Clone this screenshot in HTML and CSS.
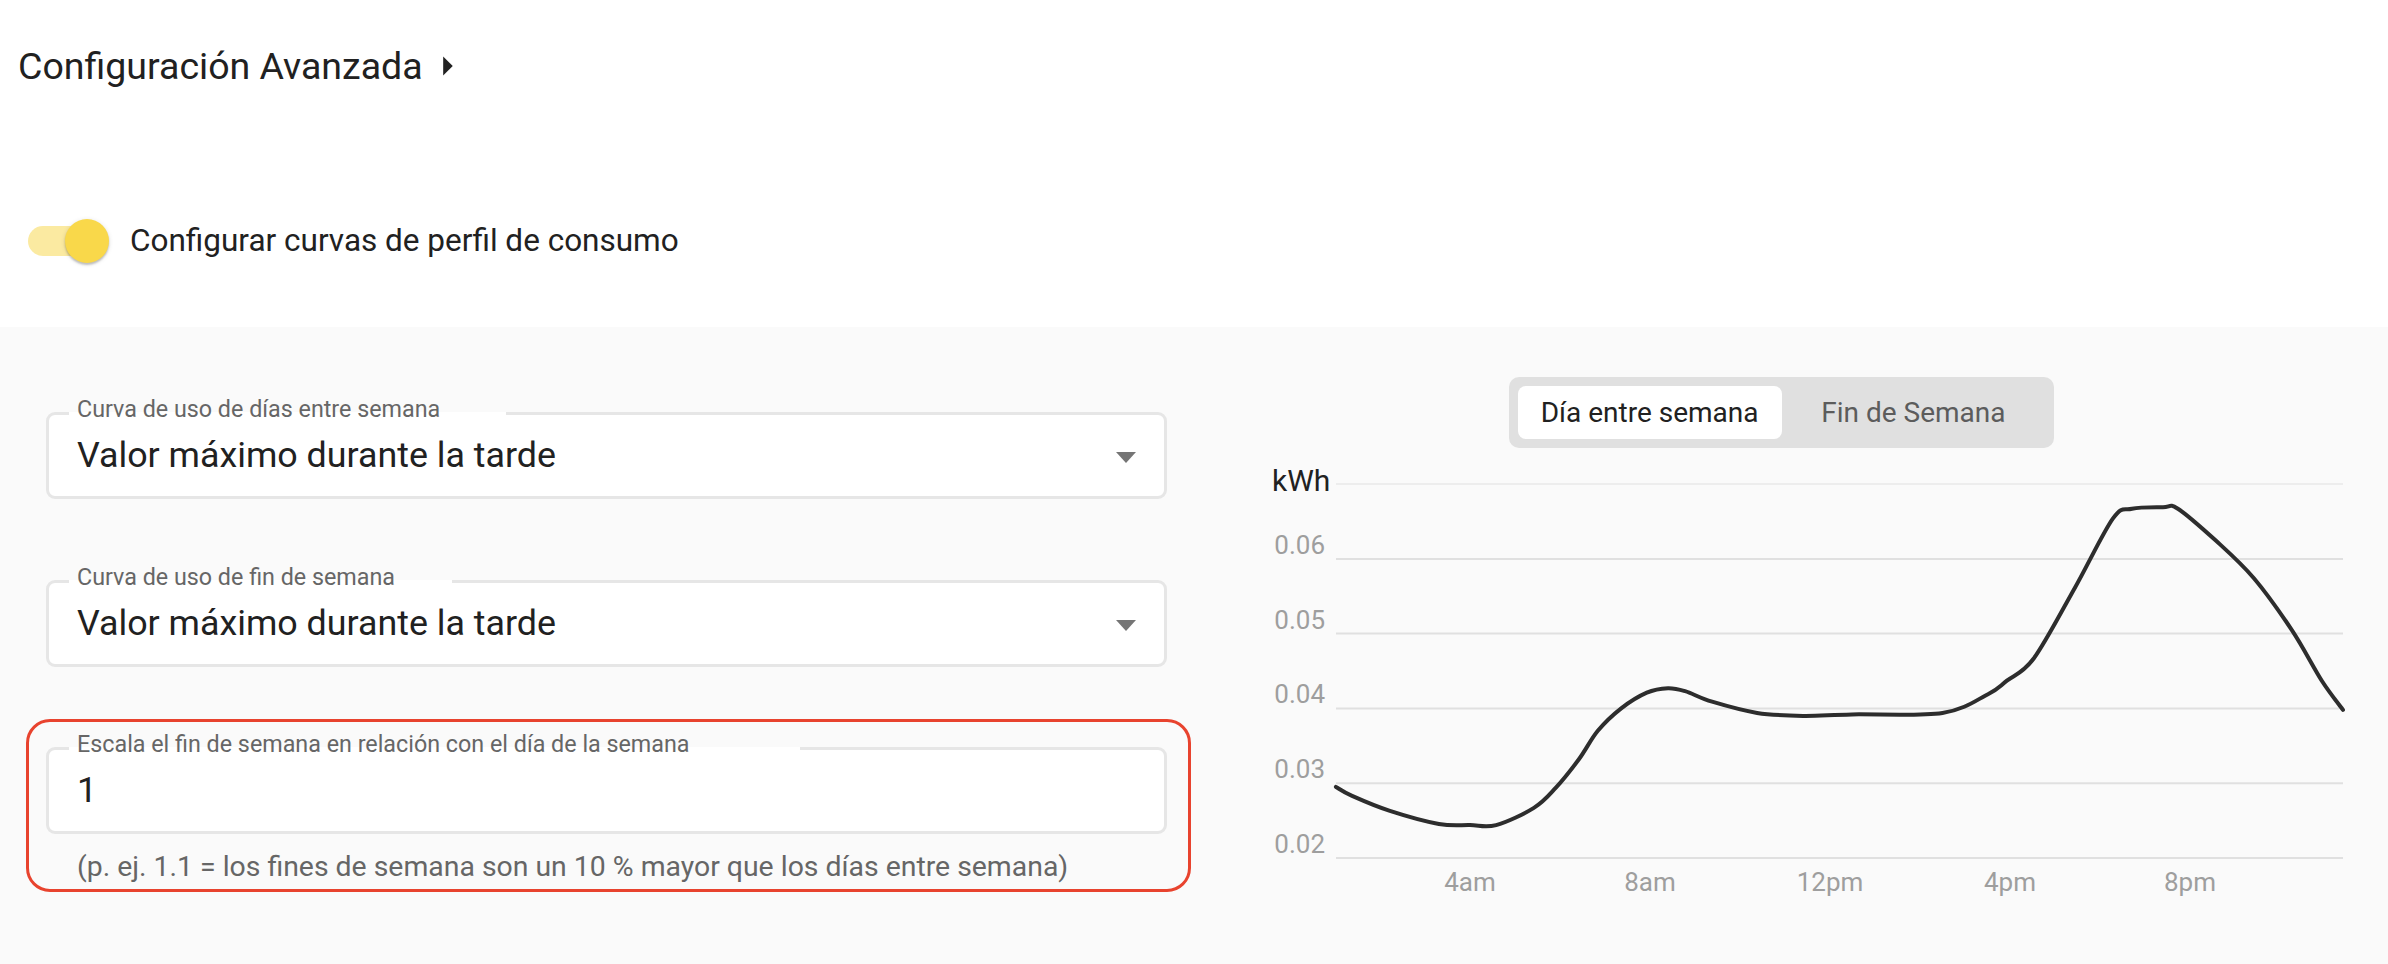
FILE: index.html
```html
<!DOCTYPE html>
<html lang="es">
<head>
    <meta charset="UTF-8">
    <meta name="viewport" content="width=device-width, initial-scale=1.0">
    <title>Configuración Avanzada</title>
    <link rel="stylesheet" href="styles.css">
</head>
<body>
    <header class="header">
        <h2 class="section-title">
            Configuración Avanzada
            <svg class="title-arrow" viewBox="0 0 24 24"><path d="M10 17l5-5-5-5z"/></svg>
        </h2>
        <label class="switch-row">
            <span class="switch">
                <span class="switch-track"></span>
                <span class="switch-thumb"></span>
            </span>
            <span class="switch-label">Configurar curvas de perfil de consumo</span>
        </label>
    </header>

    <section class="panel">
        <div class="form-col">
            <div class="field">
                <span class="field-label">Curva de uso de días entre semana</span>
                <span class="field-value">Valor máximo durante la tarde</span>
                <span class="dropdown-arrow"></span>
            </div>

            <div class="field field-second">
                <span class="field-label">Curva de uso de fin de semana</span>
                <span class="field-value">Valor máximo durante la tarde</span>
                <span class="dropdown-arrow"></span>
            </div>

            <div class="highlight">
                <div class="field">
                    <span class="field-label">Escala el fin de semana en relación con el día de la semana</span>
                    <span class="field-value">1</span>
                </div>
                <p class="helper">(p. ej. 1.1 = los fines de semana son un 10 % mayor que los días entre semana)</p>
            </div>
        </div>

        <div class="chart-col">
            <div class="segmented">
                <button class="segment active">Día entre semana</button>
                <button class="segment">Fin de Semana</button>
            </div>

            <svg class="chart" viewBox="0 0 1179 450">
                <line class="grid-line grid-top" x1="144" x2="1151" y1="23" y2="23"/>
                <line class="grid-line" x1="144" x2="1151" y1="98" y2="98"/>
                <line class="grid-line" x1="144" x2="1151" y1="172.6" y2="172.6"/>
                <line class="grid-line" x1="144" x2="1151" y1="247.4" y2="247.4"/>
                <line class="grid-line" x1="144" x2="1151" y1="322.2" y2="322.2"/>
                <line class="grid-line" x1="144" x2="1151" y1="397" y2="397"/>

                <text class="axis-unit" x="80" y="30">kWh</text>
                <text class="tick" x="133" y="93" text-anchor="end">0.06</text>
                <text class="tick" x="133" y="168" text-anchor="end">0.05</text>
                <text class="tick" x="133" y="242" text-anchor="end">0.04</text>
                <text class="tick" x="133" y="317" text-anchor="end">0.03</text>
                <text class="tick" x="133" y="392" text-anchor="end">0.02</text>

                <text class="tick" x="278" y="430" text-anchor="middle">4am</text>
                <text class="tick" x="458" y="430" text-anchor="middle">8am</text>
                <text class="tick" x="638" y="430" text-anchor="middle">12pm</text>
                <text class="tick" x="818" y="430" text-anchor="middle">4pm</text>
                <text class="tick" x="998" y="430" text-anchor="middle">8pm</text>

                <path id="curve" class="curve" d=""/>
            </svg>
        </div>
    </section>

    <script>
        // perfil de día entre semana: [hora, kWh]
        const profile = [
            [1.02, 0.0295], [1.38, 0.0283], [2.22, 0.0263], [3.31, 0.02455], [4.0, 0.0244],
            [4.58, 0.0244], [5.42, 0.0267], [5.91, 0.0294], [6.42, 0.0332], [6.84, 0.037],
            [7.36, 0.0400], [7.93, 0.0421], [8.4, 0.0427], [8.78, 0.0423], [9.38, 0.0409],
            [10.38, 0.0394], [11.4, 0.0390], [12.49, 0.0392], [14.5, 0.0394],
            [15.51, 0.0419], [15.93, 0.0437], [16.53, 0.0467], [17.44, 0.0561], [18.29, 0.0654],
            [18.71, 0.0667], [19.4, 0.0669], [19.73, 0.0667], [20.58, 0.0624], [21.42, 0.0574],
            [22.27, 0.0504], [22.93, 0.0437], [23.4, 0.0398]
        ];

        const xScale = hour => 98 + 45 * hour;
        const yScale = kwh => 397 - (kwh - 0.02) * 7480;

        function smoothPath(points) {
            let d = `M${points[0][0].toFixed(1)},${points[0][1].toFixed(1)}`;
            for (let i = 0; i < points.length - 1; i++) {
                const p0 = points[i - 1] || points[i];
                const p1 = points[i];
                const p2 = points[i + 1];
                const p3 = points[i + 2] || p2;
                const c1x = p1[0] + (p2[0] - p0[0]) / 6;
                const c1y = p1[1] + (p2[1] - p0[1]) / 6;
                const c2x = p2[0] - (p3[0] - p1[0]) / 6;
                const c2y = p2[1] - (p3[1] - p1[1]) / 6;
                d += ` C${c1x.toFixed(1)},${c1y.toFixed(1)} ${c2x.toFixed(1)},${c2y.toFixed(1)} ${p2[0].toFixed(1)},${p2[1].toFixed(1)}`;
            }
            return d;
        }

        const points = profile.map(([hour, kwh]) => [xScale(hour), yScale(kwh)]);
        document.getElementById('curve').setAttribute('d', smoothPath(points));

        document.querySelectorAll('.segment').forEach(button => {
            button.addEventListener('click', () => {
                document.querySelector('.segment.active').classList.remove('active');
                button.classList.add('active');
            });
        });
    </script>
</body>
</html>
```

FILE: styles.css
```css
:root {
    --text-color: #212121;
    --muted-color: #666666;
    --axis-color: #9e9e9e;
    --field-border: #e6e6e6;
    --accent: #f9d84a;
    --panel-bg: #fafafa;
    --font-family-sans: 'Roboto', 'Liberation Sans', sans-serif;
}

body {
    margin: 0;
    min-height: 100vh;
    display: flex;
    flex-direction: column;
    font-family: var(--font-family-sans);
    color: var(--text-color);
    background-color: #fff;
}

.header {
    padding: 43px 18px 64px;
}

.section-title {
    display: flex;
    align-items: center;
    margin: 0;
    font-size: 37.5px;
    font-weight: 400;
    line-height: 43px;
}

.title-arrow {
    width: 46px;
    height: 46px;
    margin-left: 1px;
    fill: var(--text-color);
}

.switch-row {
    display: flex;
    align-items: center;
    margin-top: 130px;
    padding-left: 10px;
}

.switch {
    position: relative;
    flex-shrink: 0;
    width: 81px;
    height: 44px;
}

.switch-track {
    position: absolute;
    top: 7px;
    left: 0;
    width: 74px;
    height: 30px;
    border-radius: 15px;
    background-color: #fbeaa1;
}

.switch-thumb {
    position: absolute;
    top: 0;
    left: 37px;
    width: 44px;
    height: 44px;
    border-radius: 50%;
    background-color: var(--accent);
    box-shadow: 0 2px 2px rgba(0, 0, 0, 0.2), 0 1px 5px rgba(0, 0, 0, 0.12);
}

.switch-label {
    margin-left: 21px;
    margin-top: -2px;
    font-size: 31.5px;
}

.panel {
    flex: 1;
    display: grid;
    grid-template-columns: 1192px 1fr;
    background-color: var(--panel-bg);
}

.form-col {
    padding: 85px 25px 0 46px;
}

.field {
    position: relative;
    box-sizing: border-box;
    display: flex;
    align-items: center;
    height: 87px;
    padding: 0 28px;
    border: 3px solid var(--field-border);
    border-radius: 9px;
    background-color: #fff;
}

.field-second {
    margin-top: 81px;
}

.field-label {
    position: absolute;
    z-index: 1;
    top: -18px;
    left: 28px;
    font-size: 23.3px;
    line-height: 24px;
    white-space: nowrap;
    color: var(--muted-color);
}

/* hueco en el borde, algo más ancho que la etiqueta */
.field-label::before {
    content: '';
    position: absolute;
    z-index: -1;
    top: 15px;
    left: -8px;
    right: -18%;
    height: 3px;
    background-color: #fff;
}

.field-value {
    font-size: 35.8px;
    line-height: 43px;
}

.dropdown-arrow {
    width: 0;
    height: 0;
    margin: 4px 0 0 auto;
    border-left: 10.5px solid transparent;
    border-right: 10.5px solid transparent;
    border-top: 11px solid #757575;
}

.highlight {
    margin: 52px -24px 0 -20px;
    padding: 25px 21px 6px 17px;
    border: 3px solid #e8432e;
    border-radius: 24px;
}

.helper {
    margin: 17px 0 0;
    padding-left: 31px;
    font-size: 28.4px;
    line-height: 32px;
    color: var(--muted-color);
}

.chart-col {
    display: flex;
    flex-direction: column;
    padding: 50px 17px 0 0;
}

.segmented {
    align-self: center;
    display: grid;
    grid-template-columns: 1fr 1fr;
    padding: 9px;
    border-radius: 10px;
    background-color: #e0e0e0;
}

.segment {
    height: 53px;
    padding: 0 23px;
    border: none;
    border-radius: 8px;
    background-color: transparent;
    font-family: var(--font-family-sans);
    font-size: 28px;
    color: #5c5c5c;
    cursor: pointer;
}

.segment.active {
    background-color: #fff;
    color: var(--text-color);
}

.chart {
    display: block;
    width: 100%;
    height: 450px;
    margin-top: 13px;
}

.grid-line {
    stroke: #e0e0e0;
    stroke-width: 2;
}

.grid-top {
    stroke-width: 1;
}

.axis-unit {
    font-family: var(--font-family-sans);
    font-size: 30px;
    fill: var(--text-color);
}

.tick {
    font-family: var(--font-family-sans);
    font-size: 26px;
    fill: var(--axis-color);
}

.curve {
    fill: none;
    stroke: #2d2d2d;
    stroke-width: 4;
    stroke-linejoin: round;
    stroke-linecap: round;
}
```
